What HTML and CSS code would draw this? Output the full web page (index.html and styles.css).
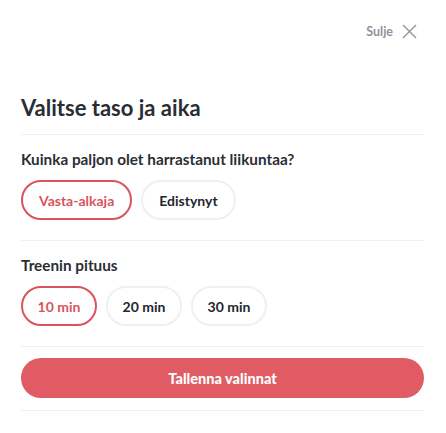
FILE: index.html
```html
<!DOCTYPE html>
<html lang="fi">
<head>
    <meta charset="UTF-8">
    <meta name="viewport" content="width=device-width, initial-scale=1.0">
    <title>Valitse taso ja aika</title>
    <link rel="stylesheet" href="styles.css">
</head>
<body>
    <div class="sheet">
        <div class="topbar">
            <button class="close">
                <span>Sulje</span>
                <svg width="15" height="15" viewBox="0 0 15 15" aria-hidden="true">
                    <path d="M1 1 L14 14 M14 1 L1 14" stroke="#8f949b" stroke-width="1.4" fill="none"/>
                </svg>
            </button>
        </div>

        <h1 class="title">Valitse taso ja aika</h1>

        <div class="section">
            <h2 class="label">Kuinka paljon olet harrastanut liikuntaa?</h2>
            <div class="pills">
                <button class="pill selected">Vasta-alkaja</button>
                <button class="pill">Edistynyt</button>
            </div>
        </div>

        <div class="section">
            <h2 class="label">Treenin pituus</h2>
            <div class="pills">
                <button class="pill short selected">10 min</button>
                <button class="pill short">20 min</button>
                <button class="pill short">30 min</button>
            </div>
        </div>

        <div class="actions">
            <button class="save">Tallenna valinnat</button>
        </div>
    </div>
</body>
</html>
```

FILE: styles.css
```css
body {
    margin: 0;
    background: #ffffff;
    font-family: Lato, "Open Sans", sans-serif;
    color: #2a2e34;
}
.sheet {
    padding: 0 22px 0 21px;
}
.topbar {
    display: flex;
    justify-content: flex-end;
    padding-top: 24px;
    padding-right: 7px;
}
.close {
    display: flex;
    align-items: center;
    gap: 9px;
    background: none;
    border: none;
    padding: 0;
    font-family: inherit;
    font-size: 12.5px;
    font-weight: 700;
    color: #8f949b;
    cursor: pointer;
}
.title {
    margin: 0;
    padding: 57px 0 14px;
    font-size: 22px;
    line-height: 24px;
    font-weight: 700;
    border-bottom: 1px solid #eeeff1;
}
.section {
    padding: 14px 0 20px;
    border-bottom: 1px solid #eeeff1;
}
.label {
    margin: 0 0 11px;
    font-size: 15.3px;
    line-height: 20px;
    font-weight: 700;
}
.pills {
    display: flex;
    gap: 9px;
}
.pill {
    height: 40px;
    padding: 0 16px;
    background: #fff;
    border: 2px solid #f0f0f1;
    border-radius: 20px;
    font-family: inherit;
    font-size: 14px;
    font-weight: 700;
    color: #23272d;
    cursor: pointer;
}
.pill.short {
    width: 76px;
    padding: 0;
}
.pill.selected {
    border-color: #d9545d;
    color: #d9545d;
}
.actions {
    padding: 11px 0 12px;
    border-bottom: 1px solid #eeeff1;
}
.save {
    display: block;
    width: 100%;
    height: 40px;
    background: #e05b63;
    border: none;
    border-radius: 20px;
    font-family: inherit;
    font-size: 14.5px;
    font-weight: 900;
    color: #fff;
    cursor: pointer;
}
```
